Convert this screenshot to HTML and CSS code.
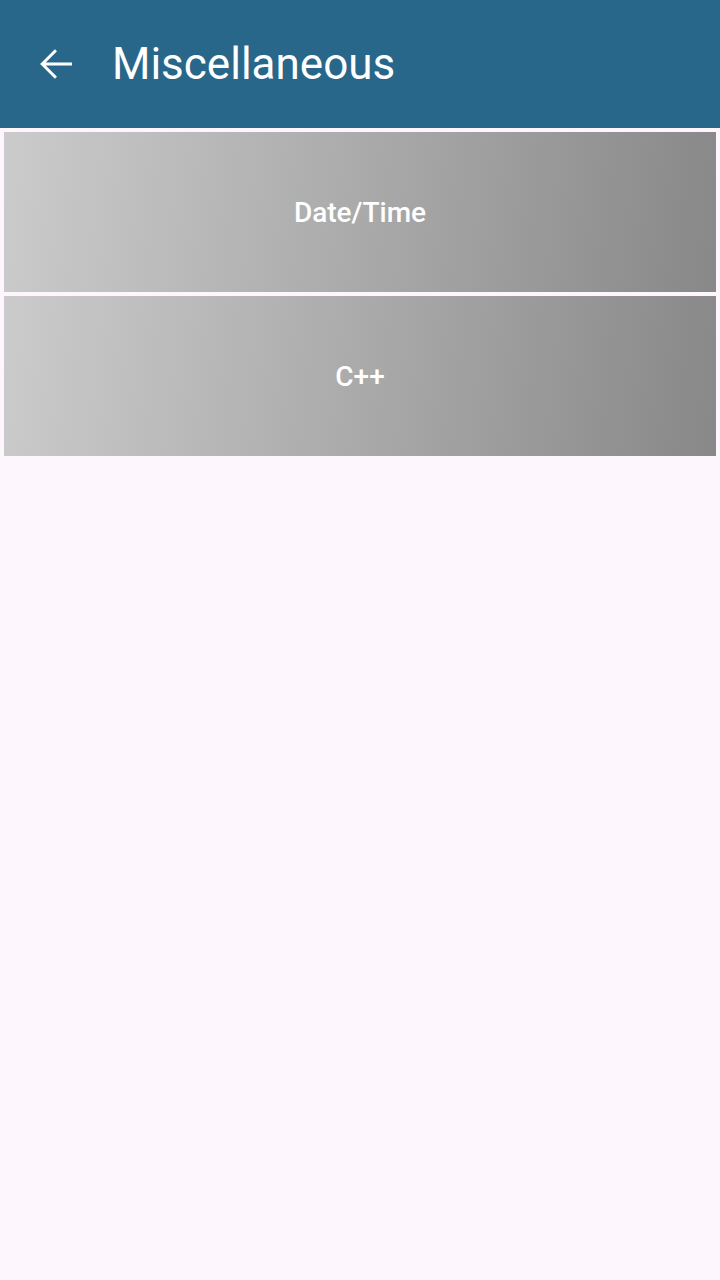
FILE: index.html
```html
<!DOCTYPE html>
<html>
<head>
<meta charset="utf-8">
<link rel="stylesheet" href="styles.css">
</head>
<body>
<header class="appbar">
  <svg class="back" viewBox="0 0 24 24" width="48" height="48"><path d="M20 11.25H6.9l5.6-5.6L11.45 4.6 4.05 12l7.4 7.4 1.05-1.05-5.6-5.6H20z" fill="#fff"/></svg>
  <h1 class="title">Miscellaneous</h1>
</header>
<main class="list">
  <div class="card">Date/Time</div>
  <div class="card">C++</div>
</main>
</body>
</html>
```
FILE: styles.css
```css
html, body { margin: 0; padding: 0; }
body {
  width: 720px;
  height: 1280px;
  background: #fdf7fd;
  font-family: Roboto, "Noto Sans", sans-serif;
  overflow: hidden;
}
.appbar {
  height: 128px;
  background: #28668a;
  display: flex;
  align-items: center;
  box-sizing: border-box;
  padding-left: 32px;
}
.back { display: block; flex: none; }
.title {
  margin: 0 0 0 32px;
  color: #fff;
  font-weight: 400;
  font-size: 44px;
  letter-spacing: 0;
}
.list {
  display: flex;
  flex-direction: column;
  gap: 4px;
  padding: 4px;
}
.card {
  height: 160px;
  display: flex;
  align-items: center;
  justify-content: center;
  color: #fff;
  font-size: 28px;
  font-weight: 500;
  background: linear-gradient(96deg, #cbcbcb 0%, #aaaaaa 50%, #888888 100%);
}
```
